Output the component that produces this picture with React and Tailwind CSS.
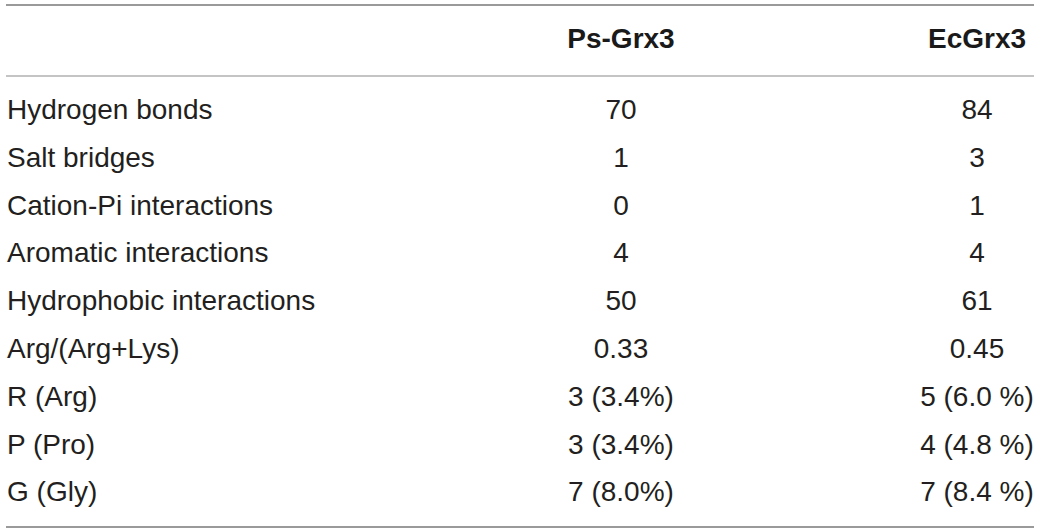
import React from "react";

const rows = [
  ["Hydrogen bonds", "70", "84"],
  ["Salt bridges", "1", "3"],
  ["Cation-Pi interactions", "0", "1"],
  ["Aromatic interactions", "4", "4"],
  ["Hydrophobic interactions", "50", "61"],
  ["Arg/(Arg+Lys)", "0.33", "0.45"],
  ["R (Arg)", "3 (3.4%)", "5 (6.0 %)"],
  ["P (Pro)", "3 (3.4%)", "4 (4.8 %)"],
  ["G (Gly)", "7 (8.0%)", "7 (8.4 %)"],
];

const App = () => {
  return (
    <div className="h-[532px] w-[1040px] bg-white px-[6px] pt-[4px] font-['Liberation_Sans',Arial,sans-serif] text-[28px] text-[#231f20]">
      {/* Header */}
      <div className="grid h-[73px] grid-cols-[476px_278px_160px_114px] border-t-2 border-b-2 border-t-[#9a9a9a] border-b-[#c4c4c4] pt-[9px] leading-[48px] font-bold text-[#1a1a1a]">
        <div />
        <div className="text-center">Ps-Grx3</div>
        <div />
        <div className="text-center">EcGrx3</div>
      </div>

      {/* Body */}
      <div className="border-b-2 border-b-[#9a9a9a] pt-[9px] pb-[10px]">
        {rows.map((row) => (
          <div
            key={row[0]}
            className="grid grid-cols-[476px_278px_160px_114px] leading-[47.8px]"
          >
            <div className="pl-px whitespace-nowrap">{row[0]}</div>
            <div className="text-center whitespace-nowrap">{row[1]}</div>
            <div />
            <div className="text-center whitespace-nowrap">{row[2]}</div>
          </div>
        ))}
      </div>
    </div>
  );
};

export default App;
